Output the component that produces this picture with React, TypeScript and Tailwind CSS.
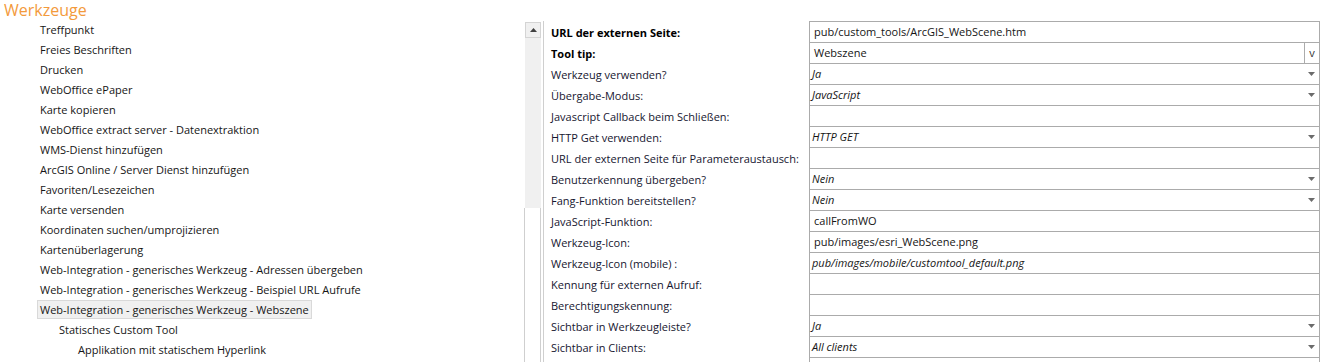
import React from 'react';

const treeItems: { label: string; level: number; selected?: boolean }[] = [
  { label: 'Treffpunkt', level: 0 },
  { label: 'Freies Beschriften', level: 0 },
  { label: 'Drucken', level: 0 },
  { label: 'WebOffice ePaper', level: 0 },
  { label: 'Karte kopieren', level: 0 },
  { label: 'WebOffice extract server - Datenextraktion', level: 0 },
  { label: 'WMS-Dienst hinzufügen', level: 0 },
  { label: 'ArcGIS Online / Server Dienst hinzufügen', level: 0 },
  { label: 'Favoriten/Lesezeichen', level: 0 },
  { label: 'Karte versenden', level: 0 },
  { label: 'Koordinaten suchen/umprojizieren', level: 0 },
  { label: 'Kartenüberlagerung', level: 0 },
  { label: 'Web-Integration - generisches Werkzeug - Adressen übergeben', level: 0 },
  { label: 'Web-Integration - generisches Werkzeug - Beispiel URL Aufrufe', level: 0 },
  { label: 'Web-Integration - generisches Werkzeug - Webszene', level: 0, selected: true },
  { label: 'Statisches Custom Tool', level: 1 },
  { label: 'Applikation mit statischem Hyperlink', level: 2 },
];

type Prop = {
  label: string;
  value?: string;
  bold?: boolean;
  italic?: boolean;
  kind?: 'text' | 'select' | 'button';
};

const props: Prop[] = [
  { label: 'URL der externen Seite:', value: 'pub/custom_tools/ArcGIS_WebScene.htm', bold: true },
  { label: 'Tool tip:', value: 'Webszene', bold: true, kind: 'button' },
  { label: 'Werkzeug verwenden?', value: 'Ja', italic: true, kind: 'select' },
  { label: 'Übergabe-Modus:', value: 'JavaScript', italic: true, kind: 'select' },
  { label: 'Javascript Callback beim Schließen:' },
  { label: 'HTTP Get verwenden:', value: 'HTTP GET', italic: true, kind: 'select' },
  { label: 'URL der externen Seite für Parameteraustausch:' },
  { label: 'Benutzerkennung übergeben?', value: 'Nein', italic: true, kind: 'select' },
  { label: 'Fang-Funktion bereitstellen?', value: 'Nein', italic: true, kind: 'select' },
  { label: 'JavaScript-Funktion:', value: 'callFromWO' },
  { label: 'Werkzeug-Icon:', value: 'pub/images/esri_WebScene.png' },
  { label: 'Werkzeug-Icon (mobile) :', value: 'pub/images/mobile/customtool_default.png', italic: true },
  { label: 'Kennung für externen Aufruf:' },
  { label: 'Berechtigungskennung:' },
  { label: 'Sichtbar in Werkzeugleiste?', value: 'Ja', italic: true, kind: 'select' },
  { label: 'Sichtbar in Clients:', value: 'All clients', italic: true, kind: 'select' },
];

const font = { fontFamily: '"Open Sans", "Noto Sans", sans-serif' };

function Caret() {
  return (
    <svg width="7" height="4" viewBox="0 0 7 4" className="shrink-0">
      <path d="M0 0 L7 0 L3.5 4 Z" fill="#6b6b6b" />
    </svg>
  );
}

export default function App() {
  return (
    <div className="flex w-[1328px] h-[362px] overflow-hidden bg-white text-[11px] text-[#151515]" style={font}>
      {/* tree */}
      <div className="w-[524px] shrink-0 flex flex-col">
        <div className="h-[19px] pl-[4px] text-[16px] leading-[20px] text-[#f39a3c]">Werkzeuge</div>
        {treeItems.map((t) => (
          <div
            key={t.label}
            className={
              'h-[20px] flex items-center ' +
              (t.level === 0 ? 'pl-[37px]' : t.level === 1 ? 'pl-[56px]' : 'pl-[75px]')
            }
          >
            <span
              className={
                'px-[2px] h-[19px] leading-[17px] border ' +
                (t.selected ? 'bg-[#f0f0f0] border-[#d9d9d9]' : 'border-transparent')
              }
            >
              {t.label}
            </span>
          </div>
        ))}
      </div>

      {/* scrollbar */}
      <div className="w-[17px] shrink-0 flex flex-col pt-[22px]">
        <div className="h-[16px] ml-[1px] border border-[#d4d4d4] bg-[#f0f0f0] flex items-center justify-center">
          <svg width="7" height="4" viewBox="0 0 7 4">
            <path d="M0 4 L7 4 L3.5 0 Z" fill="#404040" />
          </svg>
        </div>
        <div className="h-[170px] ml-[1px] bg-[#f0f0f0]" />
        <div className="flex-1 border-x border-[#cfcfcf] bg-white" />
      </div>

      {/* property grid */}
      <div className="flex-1 flex pt-[21px] pr-[8px]">
        <div className="ml-[2px] border-l border-[#cfcfcf] w-[266px] shrink-0 flex flex-col pt-[1px]">
          {props.map((p) => (
            <div
              key={p.label}
              className={
                'h-[21px] leading-[21px] pl-[7px] whitespace-nowrap ' +
                (p.bold ? 'font-bold text-black' : 'text-[#161630]')
              }
            >
              {p.label}
            </div>
          ))}
        </div>
        <div className="flex-1 flex flex-col border border-b-0 border-[#ababab]">
          {props.map((p) => (
            <div key={p.label} className="h-[21px] flex items-center border-b border-[#ababab]">
              <span
                className={
                  'flex-1 whitespace-nowrap ' + (p.italic ? 'italic pl-[2px]' : 'pl-[4px]')
                }
              >
                {p.value ?? ''}
              </span>
              {p.kind === 'select' && (
                <span className="w-[16px] flex justify-center">
                  <Caret />
                </span>
              )}
              {p.kind === 'button' && (
                <span className="w-[15px] h-full border-l border-[#ababab] flex items-center justify-center text-[#333]">
                  v
                </span>
              )}
            </div>
          ))}
        </div>
      </div>
    </div>
  );
}
